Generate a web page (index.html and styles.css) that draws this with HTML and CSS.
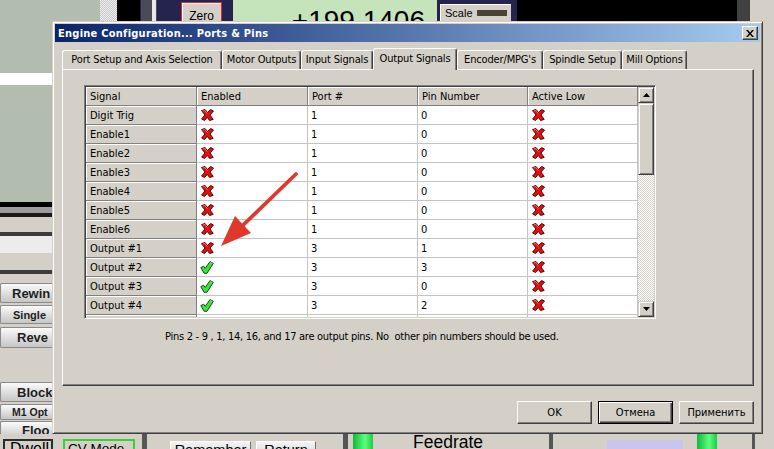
FILE: index.html
```html
<!DOCTYPE html>
<html lang="en">
<head>
<meta charset="utf-8">
<title>Engine Configuration... Ports &amp; Pins</title>
<link rel="stylesheet" href="styles.css">
</head>
<body>
<svg class="defs" aria-hidden="true">
  <symbol id="ix" viewBox="0 0 13 12">
    <path d="M0.5 1.6 L4 0.5 L6.5 3.6 L9.6 0.5 L12.5 2 L9 6 L12.2 10.4 L8.6 11.5 L6.3 8.4 L3.5 11.5 L0.6 10 L4 6 Z" fill="#e21010" stroke="#5c0000" stroke-width="1" stroke-linejoin="round"/>
    <path d="M1.8 2 L3.8 1.4 L6.3 4.6" fill="none" stroke="#ff8a8a" stroke-width="0.8"/>
  </symbol>
  <symbol id="ick" viewBox="0 0 14 13">
    <path d="M0.8 6.6 L3.6 5.2 L5.2 7.4 L10 0.6 L13.3 2.3 L7 12.3 L4.2 12.3 Z" fill="#3ee23e" stroke="#0a520a" stroke-width="1" stroke-linejoin="round"/>
    <path d="M10.4 1.6 L12.2 2.5" fill="none" stroke="#b8ffb8" stroke-width="0.8"/>
  </symbol>
</svg>
<div class="screen">
  <!-- Mach3 screen behind the dialog -->
  <div class="bg-green"></div>
  <div class="bg-whiteband"></div>
  <div class="bg-dither"></div>
  <div class="bg-black"></div>
  <div class="bg-navy"></div>
  <div class="bg-slider"></div>
  <div class="zero">Zero</div>
  <div class="dro">+199.1406</div>
  <div class="scale"><span>Scale</span><span class="scale-bar"></span></div>
  <div class="bg-black2"></div>
  <div class="bg-darkgray"></div>

  <div class="leftcol">
    <div class="strip s-black5"></div>
    <div class="strip s-gray6"></div>
    <div class="strip s-black4"></div>
    <div class="strip s-face15"></div>
    <div class="strip s-dark4"></div>
    <div class="strip s-light17"></div>
    <div class="strip s-face17"></div>
    <div class="strip s-dark4"></div>
    <div class="m3btn b-rewind">Rewin</div>
    <div class="m3btn b-single">Single</div>
    <div class="m3btn b-reverse">Reve</div>
    <div class="m3btn b-block">Block</div>
    <div class="m3btn b-m1">M1 Opt</div>
    <div class="m3btn b-flood">Floo</div>
  </div>

  <div class="bottom">
    <div class="m3-dwell">Dwell</div>
    <div class="m3-cv">CV Mode</div>
    <div class="m3-vbar v1"></div>
    <div class="m3-raised r-remember">Remember</div>
    <div class="m3-raised r-return">Return</div>
    <div class="m3-vbar v2"></div>
    <div class="m3-green g1"></div>
    <div class="m3-feed">Feedrate</div>
    <div class="m3-vbar v3"></div>
    <div class="m3-lav"></div>
    <div class="m3-green g2"></div>
    <div class="m3-vbar v4"></div>
  </div>

  <!-- Dialog -->
  <div class="dialog">
    <div class="titlebar">
      <span class="title">Engine Configuration... Ports &amp; Pins</span>
      <span class="close"><svg width="8" height="7" viewBox="0 0 8 7"><path d="M0 0h2l2 2.4L6 0h2L5 3.5 8 7H6L4 4.6 2 7H0l3-3.5z" fill="#000"/></svg></span>
    </div>
    <div class="tabs">
      <div class="tab t1">Port Setup and Axis Selection</div>
      <div class="tab t2">Motor Outputs</div>
      <div class="tab t3">Input Signals</div>
      <div class="tab t4 active">Output Signals</div>
      <div class="tab t5">Encoder/MPG's</div>
      <div class="tab t6">Spindle Setup</div>
      <div class="tab t7">Mill Options</div>
    </div>
    <div class="panel">
      <div class="gridframe">
        <div class="gridbody">
          <div class="table">
            <div class="row head"><div class="c">Signal</div><div class="c">Enabled</div><div class="c">Port #</div><div class="c">Pin Number</div><div class="c">Active Low</div></div>
            <div class="row"><div class="c fixed">Digit Trig</div><div class="c"><svg class="ico"><use href="#ix"/></svg></div><div class="c">1</div><div class="c">0</div><div class="c"><svg class="ico"><use href="#ix"/></svg></div></div>
            <div class="row"><div class="c fixed">Enable1</div><div class="c"><svg class="ico"><use href="#ix"/></svg></div><div class="c">1</div><div class="c">0</div><div class="c"><svg class="ico"><use href="#ix"/></svg></div></div>
            <div class="row"><div class="c fixed">Enable2</div><div class="c"><svg class="ico"><use href="#ix"/></svg></div><div class="c">1</div><div class="c">0</div><div class="c"><svg class="ico"><use href="#ix"/></svg></div></div>
            <div class="row"><div class="c fixed">Enable3</div><div class="c"><svg class="ico"><use href="#ix"/></svg></div><div class="c">1</div><div class="c">0</div><div class="c"><svg class="ico"><use href="#ix"/></svg></div></div>
            <div class="row"><div class="c fixed">Enable4</div><div class="c"><svg class="ico"><use href="#ix"/></svg></div><div class="c">1</div><div class="c">0</div><div class="c"><svg class="ico"><use href="#ix"/></svg></div></div>
            <div class="row"><div class="c fixed">Enable5</div><div class="c"><svg class="ico"><use href="#ix"/></svg></div><div class="c">1</div><div class="c">0</div><div class="c"><svg class="ico"><use href="#ix"/></svg></div></div>
            <div class="row"><div class="c fixed">Enable6</div><div class="c"><svg class="ico"><use href="#ix"/></svg></div><div class="c">1</div><div class="c">0</div><div class="c"><svg class="ico"><use href="#ix"/></svg></div></div>
            <div class="row"><div class="c fixed">Output #1</div><div class="c"><svg class="ico"><use href="#ix"/></svg></div><div class="c">3</div><div class="c">1</div><div class="c"><svg class="ico"><use href="#ix"/></svg></div></div>
            <div class="row"><div class="c fixed">Output #2</div><div class="c"><svg class="ico ck"><use href="#ick"/></svg></div><div class="c">3</div><div class="c">3</div><div class="c"><svg class="ico"><use href="#ix"/></svg></div></div>
            <div class="row"><div class="c fixed">Output #3</div><div class="c"><svg class="ico ck"><use href="#ick"/></svg></div><div class="c">3</div><div class="c">0</div><div class="c"><svg class="ico"><use href="#ix"/></svg></div></div>
            <div class="row"><div class="c fixed">Output #4</div><div class="c"><svg class="ico ck"><use href="#ick"/></svg></div><div class="c">3</div><div class="c">2</div><div class="c"><svg class="ico"><use href="#ix"/></svg></div></div>
            <div class="row partial"><div class="c fixed"></div><div class="c"><svg class="ico"><use href="#ix"/></svg></div><div class="c"></div><div class="c"></div><div class="c"><svg class="ico"><use href="#ix"/></svg></div></div>
          </div>
          <div class="vscroll">
            <div class="sb-btn"><svg width="7" height="4" viewBox="0 0 7 4"><path d="M0 4h7L3.5 0z" fill="#000"/></svg></div>
            <div class="sb-thumb"></div>
            <div class="sb-track"></div>
            <div class="sb-btn"><svg width="7" height="4" viewBox="0 0 7 4"><path d="M0 0h7L3.5 4z" fill="#000"/></svg></div>
          </div>
        </div>
      </div>
      <p class="hint">Pins 2 - 9 , 1, 14, 16, and 17 are output pins. No&nbsp; other pin numbers should be used.</p>
    </div>
    <div class="btnrow">
      <div class="btn">OK</div>
      <div class="btn default">Отмена</div>
      <div class="btn">Применить</div>
    </div>
  </div>

  <svg class="arrow" width="774" height="449" viewBox="0 0 774 449" aria-hidden="true">
    <line x1="296" y1="174" x2="238" y2="230" stroke="#e0392b" stroke-width="3.8" stroke-linecap="round"/>
    <polygon points="221,246 251,233 235,216" fill="#e0392b"/>
  </svg>
</div>
</body>
</html>
```

FILE: styles.css
```css
* { box-sizing: border-box; }
html, body { margin: 0; padding: 0; }
body {
  width: 774px;
  height: 449px;
  overflow: hidden;
  background: #d4d0c8;
  font-family: "DejaVu Sans Condensed", "Liberation Sans", Arial, sans-serif;
  font-size: 11px;
  color: #000;
}
.defs { position: absolute; width: 0; height: 0; overflow: hidden; }
.screen {
  position: relative;
  width: 774px;
  height: 449px;
  overflow: hidden;
  background: #d4d0c8;
}

/* ---------- Mach3 background canvas ---------- */
.bg-green, .bg-whiteband, .bg-dither, .bg-black, .bg-navy, .bg-slider,
.zero, .dro, .scale, .bg-black2, .bg-darkgray, .leftcol, .bottom { position: absolute; }

.bg-green { left: 0; top: 0; width: 100px; height: 202px; background: #b2bdaf; }
.bg-whiteband { left: 0; top: 73px; width: 52px; height: 12px; background: #fff; }
.bg-dither {
  left: 100px; top: 0; width: 17px; height: 21px;
  background: repeating-conic-gradient(#c8c8c8 0 25%, #eeeeee 0 50%) 0 0 / 2px 2px;
}
.bg-black { left: 117px; top: 0; width: 23px; height: 21px; background: #000; }
.bg-navy { left: 140px; top: 0; width: 377px; height: 21px; background: #24244e; }
.bg-slider {
  left: 141px; top: 0; width: 16px; height: 21px;
  background: linear-gradient(90deg, #4a4a58 0 70%, #e8e8e8 70% 92%, #4a4a58 92%);
}
.zero {
  left: 181px; top: 2px; width: 41px; height: 19px;
  border: 1px solid #e02828;
  border-bottom: 0;
  background: #d4d0c8;
  box-shadow: inset 1px 1px #fff;
  font-family: "Liberation Sans", Arial, sans-serif;
  font-size: 12px;
  line-height: 14px;
  padding-top: 6px;
  text-align: center;
  overflow: hidden;
}
.dro {
  left: 233px; top: 0; width: 204px; height: 21px;
  background: #c6e4bc;
  font-family: "Liberation Sans", Arial, sans-serif;
  font-size: 28px;
  line-height: 28px;
  padding: 7px 12px 0 0;
  text-align: right;
  overflow: hidden;
  white-space: nowrap;
}
.scale {
  left: 440px; top: 4px; width: 71px; height: 17px;
  background: #d4d0c8;
  box-shadow: inset 1px 1px #fff;
  display: flex;
  align-items: center;
  gap: 4px;
  padding: 0 0 0 5px;
  font-family: "Liberation Sans", Arial, sans-serif;
  font-size: 11px;
}
.scale-bar { width: 30px; height: 6px; background: #4b4434; }
.bg-black2 { left: 517px; top: 0; width: 220px; height: 21px; background: #000; }
.bg-darkgray { left: 737px; top: 0; width: 13px; height: 21px; background: #404040; }

.leftcol {
  left: 0; top: 202px; width: 52px;
  display: flex;
  flex-direction: column;
  font-family: "Liberation Sans", Arial, sans-serif;
}
.strip { width: 100%; }
.s-black5 { height: 5px; background: #000; }
.s-gray6 { height: 6px; background: #9c9c9c; }
.s-black4 { height: 4px; background: #1a1a1a; }
.s-face15 { height: 15px; background: #d4d0c8; }
.s-dark4 { height: 4px; background: #3c3c3c; }
.s-light17 { height: 17px; background: #ececec; }
.s-face17 { height: 17px; background: #d4d0c8; }

.m3btn {
  width: 52px;
  background: linear-gradient(#fbfbfb, #dcdcdc 55%, #c6c6c6);
  border: 1px solid #8a8a8a;
  border-right: 0;
  border-radius: 2px 0 0 2px;
  font-weight: bold;
  color: #1e1e1e;
  white-space: nowrap;
  overflow: hidden;
  display: flex;
  align-items: center;
}
.b-rewind { margin-top: 9px; height: 20px; font-size: 13px; padding-left: 11px; }
.b-single { margin-top: 2px; height: 19px; font-size: 11px; padding-left: 12px; }
.b-reverse { margin-top: 3px; height: 21px; font-size: 13px; padding-left: 16px; }
.b-block { margin-top: 34px; height: 20px; font-size: 13px; padding-left: 16px; }
.b-m1 { margin-top: 2px; height: 16px; font-size: 10.5px; padding-left: 11px; }
.b-flood { margin-top: 1px; height: 19px; font-size: 13px; padding-left: 21px; }

.bottom {
  left: 0; top: 434px; width: 774px; height: 15px;
  background: #d4d0c8;
  font-family: "Liberation Sans", Arial, sans-serif;
  overflow: hidden;
}
.bottom > div { position: absolute; }
.m3-dwell {
  left: 3px; top: 5px; width: 50px; height: 16px;
  border: 2px solid #2c2c2c;
  font-size: 16px; line-height: 16px;
  padding-left: 5px;
}
.m3-cv {
  left: 63px; top: 5px; width: 72px; height: 16px;
  border: 2px solid #3ccf3c;
  font-size: 13.5px; line-height: 16px;
  padding-left: 3px;
  white-space: nowrap;
}
.m3-vbar { top: 0; height: 15px; background: #555; }
.v1 { left: 142px; width: 5px; }
.v2 { left: 343px; width: 5px; }
.v3 { left: 549px; width: 4px; }
.v4 { left: 752px; width: 3px; }
.m3-raised {
  top: 7px; height: 14px;
  border-top: 1px solid #fff;
  border-left: 1px solid #fff;
  border-right: 1px solid #707070;
  background: linear-gradient(#f4f4f4, #d8d8d8);
  font-size: 14.5px; line-height: 16px;
  text-align: center;
}
.r-remember { left: 170px; width: 81px; }
.r-return { left: 256px; width: 60px; }
.m3-green { top: 0; height: 15px; background: linear-gradient(90deg, #12b83a, #5cff7c 60%, #1ccc46); }
.g1 { left: 353px; width: 20px; }
.g2 { left: 697px; width: 20px; }
.m3-feed { left: 413px; top: 0; font-size: 17.5px; line-height: 17px; }
.m3-lav { left: 607px; top: 6px; width: 76px; height: 9px; background: #c9c5ef; }

/* ---------- Dialog ---------- */
.dialog {
  position: absolute;
  left: 52px; top: 21px;
  width: 711px; height: 413px;
  background: #d4d0c8;
  border: 1px solid;
  border-color: #d4d0c8 #404040 #404040 #d4d0c8;
  box-shadow: inset 1px 1px #fff, inset -1px -1px #808080;
  padding: 2px;
  display: flex;
  flex-direction: column;
}
.titlebar {
  height: 18px;
  flex: none;
  display: flex;
  align-items: center;
  justify-content: space-between;
  background: linear-gradient(90deg, #0a246a, #a6caf0);
  padding: 0 2px 0 3px;
}
.title { color: #fff; font-weight: bold; font-size: 11px; letter-spacing: 0.25px; white-space: nowrap; }
.close {
  width: 16px; height: 14px;
  background: #d4d0c8;
  border: 1px solid;
  border-color: #fff #404040 #404040 #fff;
  box-shadow: inset -1px -1px #808080;
  display: flex;
  align-items: center;
  justify-content: center;
}

.tabs {
  display: flex;
  align-items: flex-start;
  height: 21px;
  margin: 6px 0 0 7px;
  flex: none;
}
.tab {
  height: 19px;
  margin-top: 2px;
  border-top: 1px solid #fff;
  border-left: 1px solid #fff;
  border-right: 1px solid #404040;
  box-shadow: inset -1px 0 #808080;
  border-radius: 3px 3px 0 0;
  text-align: center;
  line-height: 18px;
  letter-spacing: -0.15px;
  white-space: nowrap;
  overflow: hidden;
}
.tab.active {
  height: 22px;
  margin-top: 0;
  position: relative;
  z-index: 1;
  background: #d4d0c8;
  line-height: 19px;
}
.t1 { width: 160px; }
.t2 { width: 79px; }
.t3 { width: 72px; }
.t4 { width: 84px; }
.t5 { width: 86px; }
.t6 { width: 79px; }
.t7 { width: 65px; }

.panel {
  flex: none;
  height: 317px;
  margin: 0 6px 0 7px;
  border: 1px solid;
  border-color: #fff #404040 #404040 #fff;
  box-shadow: inset -1px -1px #808080;
  padding: 15px 0 0 21px;
}
.gridframe {
  width: 572px;
  height: 234px;
  border: 1px solid;
  border-color: #808080 #fff #fff #808080;
  box-shadow: inset 1px 1px #404040, inset -1px -1px #d4d0c8;
  padding: 1px;
}
.gridbody {
  display: flex;
  width: 568px;
  height: 230px;
  overflow: hidden;
  background: #fff;
}
.table { width: 552px; height: 230px; overflow: hidden; }
.row {
  display: grid;
  grid-template-columns: 111px 111px 110px 110px 110px;
  height: 19px;
}
.c {
  background: #fff;
  border-right: 1px solid #c4c4c4;
  border-bottom: 1px solid #c4c4c4;
  padding-left: 3px;
  display: flex;
  align-items: center;
  white-space: nowrap;
  overflow: hidden;
}
.head .c, .c.fixed {
  background: #d4d0c8;
  border-color: #808080;
  box-shadow: inset 1px 1px #fff;
  padding-left: 4px;
}
.ico { width: 13px; height: 12px; margin-left: 1px; }
.ico.ck { width: 14px; height: 13px; margin-left: 0; }

.vscroll {
  width: 16px;
  height: 230px;
  display: flex;
  flex-direction: column;
}
.sb-btn, .sb-thumb {
  width: 16px;
  background: #d4d0c8;
  border: 1px solid;
  border-color: #d4d0c8 #404040 #404040 #d4d0c8;
  box-shadow: inset 1px 1px #fff, inset -1px -1px #808080;
}
.sb-btn {
  height: 16px;
  flex: none;
  display: flex;
  align-items: center;
  justify-content: center;
}
.sb-thumb { height: 72px; flex: none; }
.sb-track {
  flex: 1;
  background: repeating-conic-gradient(#d4d0c8 0 25%, #fff 0 50%) 0 0 / 2px 2px;
}

.hint {
  margin: 11px 0 0 81px;
  line-height: 13px;
  letter-spacing: -0.28px;
  white-space: nowrap;
}

.btnrow {
  display: flex;
  justify-content: flex-end;
  gap: 6px;
  margin: 15px 6px 0 0;
  flex: none;
}
.btn {
  width: 75px;
  height: 23px;
  background: #d4d0c8;
  border: 1px solid;
  border-color: #fff #404040 #404040 #fff;
  box-shadow: inset -1px -1px #808080;
  display: flex;
  align-items: center;
  justify-content: center;
}
.btn.default {
  border-color: #000;
  box-shadow: inset 1px 1px #fff, inset -1px -1px #404040, inset -2px -2px #808080;
}

.arrow {
  position: absolute;
  left: 0; top: 0;
  pointer-events: none;
}
```
